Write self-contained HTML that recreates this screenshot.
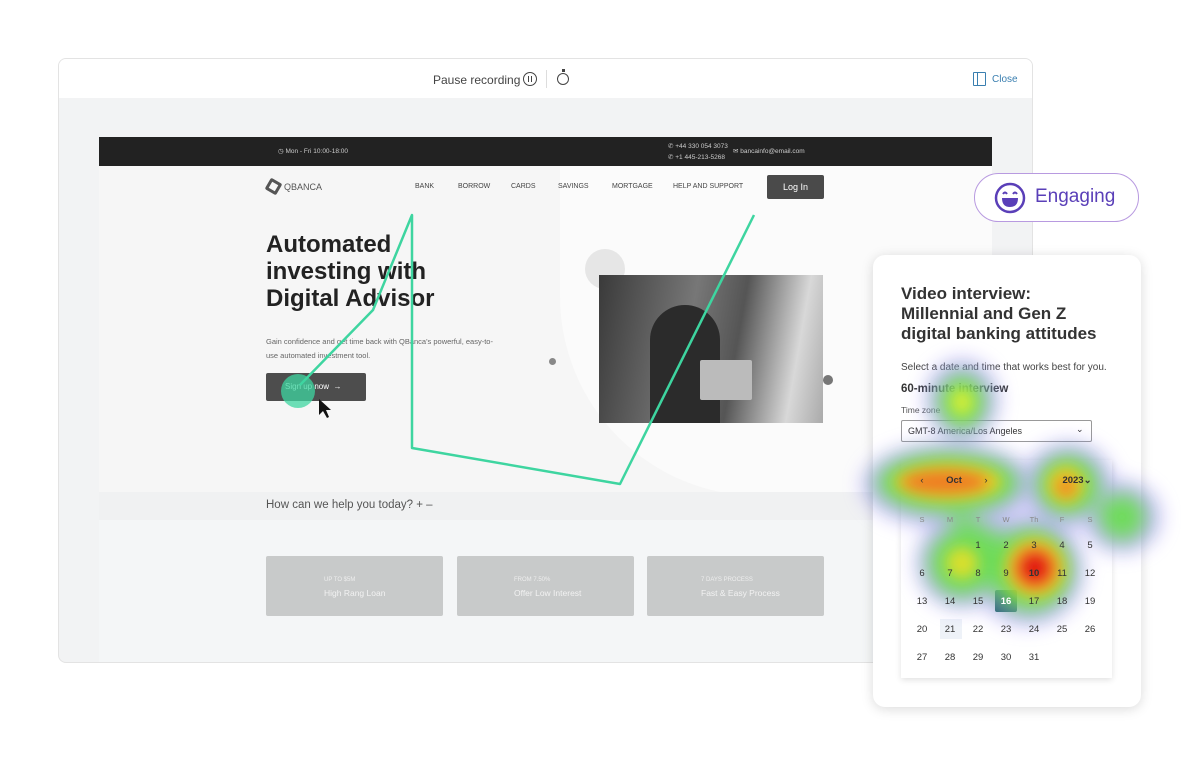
<!DOCTYPE html>
<html><head><meta charset="utf-8"><style>
*{margin:0;padding:0;box-sizing:border-box}
body{width:1200px;height:768px;background:#fff;font-family:"Liberation Sans",sans-serif;position:relative;overflow:hidden}
.abs{position:absolute}
.frame{left:58px;top:58px;width:975px;height:605px;border:1px solid #e3e3e3;border-radius:8px;background:#f2f3f4;overflow:hidden}
.hdr{left:0;top:0;width:100%;height:39px;background:#fff}
.t{position:absolute;white-space:nowrap}
.nav span{position:absolute;font-size:7px;color:#444;top:183px}
.cal span{position:absolute;width:20px;text-align:center;font-size:9.5px;color:#333}
</style></head><body>
<div class="abs frame">
 <div class="abs hdr"></div>
 <div class="t" style="left:374px;top:14px;font-size:12px;color:#444">Pause recording</div>
 <div class="abs" style="left:464px;top:13px;width:14px;height:14px;border:1.3px solid #444;border-radius:50%"></div>
 <div class="abs" style="left:469px;top:17px;width:4px;height:6px;border-left:1.3px solid #444;border-right:1.3px solid #444"></div>
 <div class="abs" style="left:487px;top:11px;width:1px;height:18px;background:#ddd"></div>
 <div class="abs" style="left:498px;top:14px;width:12px;height:12px;border:1.3px solid #444;border-radius:50%"></div>
 <div class="abs" style="left:503px;top:10px;width:3px;height:3px;background:#444"></div>
 <div class="abs" style="left:914px;top:13px;width:13px;height:14px;border:1.3px solid #3a7fb0;border-radius:1px"></div>
 <div class="abs" style="left:918px;top:13px;width:1px;height:14px;background:#3a7fb0"></div>
 <div class="t" style="left:933px;top:15px;font-size:10px;color:#3a7fb0">Close</div>
</div>
<!-- site -->
<div class="abs" style="left:99px;top:137px;width:893px;height:29px;background:#222"></div>
<div class="t" style="left:278px;top:147px;font-size:6.5px;color:#ccc">◷ Mon - Fri 10:00-18:00</div>
<div class="t" style="left:668px;top:142px;font-size:6.5px;color:#ccc">✆ +44 330 054 3073</div>
<div class="t" style="left:668px;top:153px;font-size:6.5px;color:#ccc">✆ +1 445-213-5268</div>
<div class="t" style="left:733px;top:147px;font-size:6.5px;color:#ccc">✉ bancainfo@email.com</div>
<div class="abs" style="left:99px;top:166px;width:893px;height:330px;background:#f6f6f6"></div>
<div class="abs" style="left:560px;top:166px;width:432px;height:330px;background:#fbfbfb;border-radius:0 0 0 200px"></div>
<div class="abs" style="left:267px;top:180px;width:13px;height:13px;border:3px solid #555;transform:rotate(30deg);border-radius:2px"></div>
<div class="t" style="left:284px;top:182px;font-size:9px;color:#555">QBANCA</div>
<div class="nav">
<span style="left:415px">BANK</span><span style="left:458px">BORROW</span><span style="left:511px">CARDS</span><span style="left:558px">SAVINGS</span><span style="left:612px">MORTGAGE</span><span style="left:673px">HELP AND SUPPORT</span></div>
<div class="abs" style="left:767px;top:175px;width:57px;height:24px;background:#4a4a4a;border-radius:2px;color:#fff;font-size:9px;text-align:center;line-height:24px">Log In</div>
<div class="t" style="left:266px;top:231px;font-size:24px;line-height:27px;font-weight:bold;color:#222">Automated<br>investing with<br>Digital Advisor</div>
<div class="t" style="left:266px;top:335px;font-size:7.5px;line-height:14px;color:#666">Gain confidence and get time back with QBanca's powerful, easy-to-<br>use automated investment tool.</div>
<div class="abs" style="left:266px;top:373px;width:100px;height:28px;background:#4d4d4d;border-radius:2px"></div>
<div class="t" style="left:285px;top:382px;font-size:8px;color:#fff">Sign up now &nbsp;→</div>
<div class="abs" style="left:281px;top:374px;width:34px;height:34px;border-radius:50%;background:rgba(62,213,160,.75)"></div>
<div class="abs" style="left:549px;top:358px;width:7px;height:7px;border-radius:50%;background:#888"></div>
<div class="abs" style="left:823px;top:375px;width:10px;height:10px;border-radius:50%;background:#777"></div>
<div class="abs" style="left:585px;top:249px;width:40px;height:40px;border-radius:50%;background:#e6e6e6"></div>
<div class="abs" style="left:599px;top:275px;width:224px;height:148px;background:linear-gradient(100deg,#3a3a3a,#777 40%,#555 60%,#d8d8d8 85%,#aaa)"></div>
<div class="abs" style="left:650px;top:305px;width:70px;height:118px;border-radius:35px 35px 0 0;background:#2b2b2b"></div>
<div class="abs" style="left:700px;top:360px;width:52px;height:40px;background:#bbb;border-radius:2px"></div>
<div class="abs" style="left:99px;top:492px;width:893px;height:28px;background:#f0f1f2"></div>
<div class="t" style="left:266px;top:499px;font-size:11.5px;color:#555">How can we help you today? + –</div>
<div class="abs" style="left:99px;top:520px;width:893px;height:142px;background:#f4f6f7"></div>
<div class="abs" style="left:266px;top:556px;width:177px;height:60px;background:#c8caca;border-radius:2px"></div>
<div class="abs" style="left:457px;top:556px;width:177px;height:60px;background:#c8caca;border-radius:2px"></div>
<div class="abs" style="left:647px;top:556px;width:177px;height:60px;background:#c8caca;border-radius:2px"></div>
<div class="t" style="left:324px;top:577px;font-size:6px;color:#eee">UP TO $5M</div><div class="t" style="left:324px;top:588px;font-size:8.5px;color:#f2f2f2">High Rang Loan</div>
<div class="t" style="left:514px;top:577px;font-size:6px;color:#eee">FROM 7.50%</div><div class="t" style="left:514px;top:588px;font-size:8.5px;color:#f2f2f2">Offer Low Interest</div>
<div class="t" style="left:701px;top:577px;font-size:6px;color:#eee">7 DAYS PROCESS</div><div class="t" style="left:701px;top:588px;font-size:8.5px;color:#f2f2f2">Fast &amp; Easy Process</div>
<svg class="abs" style="left:0;top:0" width="1200" height="768"><polyline points="300,385 373,310 412,215 412,448 620,484 754,215" fill="none" stroke="#3ed5a0" stroke-width="2.5" stroke-linejoin="round"/>
<path d="M319,399 L319,415 L323,411 L327,418 L329,417 L326,410 L331,410 Z" fill="#111"/></svg>
<!-- engaging -->
<div class="abs" style="left:974px;top:173px;width:165px;height:49px;border:1.5px solid #b89ae0;border-radius:25px;background:#fff"></div>
<svg class="abs" style="left:994px;top:182px" width="32" height="32"><circle cx="16" cy="16" r="14" fill="none" stroke="#5a3fb8" stroke-width="2.5"/><path d="M9,12 q2,-3 4,0 M19,12 q2,-3 4,0" fill="none" stroke="#5a3fb8" stroke-width="2"/><path d="M8,16 h16 q0,9 -8,9 q-8,0 -8,-9z" fill="#5a3fb8"/></svg>
<div class="t" style="left:1035px;top:186px;font-size:19px;color:#5a3fb8">Engaging</div>
<!-- card -->
<div class="abs" style="left:873px;top:255px;width:268px;height:452px;background:#fff;border-radius:12px;box-shadow:0 2px 12px rgba(0,0,0,.15)"></div>
<div class="t" style="left:901px;top:284px;font-size:17px;line-height:20px;font-weight:bold;color:#333">Video interview:<br>Millennial and Gen Z<br>digital banking attitudes</div>
<div class="t" style="left:901px;top:362px;font-size:10px;color:#444">Select a date and time that works best for you.</div>
<div class="t" style="left:901px;top:383px;font-size:11.5px;font-weight:bold;color:#333">60-minute interview</div>
<div class="t" style="left:901px;top:405px;font-size:8.5px;color:#555">Time zone</div>
<div class="abs" style="left:901px;top:420px;width:191px;height:22px;border:1px solid #999;border-radius:2px"></div>
<div class="t" style="left:908px;top:426px;font-size:9px;color:#333">GMT-8 America/Los Angeles</div>
<div class="t" style="left:1076px;top:424px;font-size:9px;color:#333">⌄</div>
<div class="abs" style="left:901px;top:460px;width:211px;height:218px;background:#fff;box-shadow:0 2px 6px rgba(0,0,0,.12)"></div>
<div class="abs" style="left:995px;top:590px;width:22px;height:22px;background:#0f5e50;border-radius:2px"></div>
<div class="abs" style="left:940px;top:619px;width:22px;height:20px;background:#eef2f8"></div>
<!-- heatmap -->
<svg class="abs" style="left:0;top:0" width="1200" height="768">
<defs><filter id="b" x="-50%" y="-50%" width="200%" height="200%"><feGaussianBlur stdDeviation="10"/></filter><filter id="c" x="-50%" y="-50%" width="200%" height="200%"><feGaussianBlur stdDeviation="7"/></filter></defs>
<g filter="url(#b)" opacity=".55">
<ellipse cx="948" cy="485" rx="85" ry="42" fill="#8b7cf5"/><ellipse cx="1068" cy="485" rx="45" ry="42" fill="#8b7cf5"/><ellipse cx="1122" cy="517" rx="38" ry="35" fill="#8b7cf5"/>
<ellipse cx="1028" cy="570" rx="55" ry="55" fill="#8b7cf5"/><ellipse cx="962" cy="563" rx="45" ry="45" fill="#8b7cf5"/><ellipse cx="962" cy="400" rx="36" ry="40" fill="#8b7cf5"/>
<ellipse cx="990" cy="535" rx="65" ry="18" fill="#8b7cf5" transform="rotate(30 990 535)"/>
</g>
<g filter="url(#b)" opacity=".9">
<ellipse cx="948" cy="483" rx="72" ry="30" fill="#66e04a"/><ellipse cx="1068" cy="485" rx="32" ry="30" fill="#66e04a"/><ellipse cx="1122" cy="517" rx="24" ry="24" fill="#66e04a"/>
<ellipse cx="1030" cy="570" rx="42" ry="42" fill="#66e04a"/><ellipse cx="962" cy="563" rx="34" ry="34" fill="#66e04a"/><ellipse cx="962" cy="402" rx="24" ry="28" fill="#66e04a"/>
<ellipse cx="990" cy="540" rx="45" ry="10" fill="#66e04a" transform="rotate(30 990 540)"/>
</g>
<g filter="url(#c)">
<ellipse cx="948" cy="482" rx="54" ry="19" fill="#f2d020" opacity=".9"/><ellipse cx="1066" cy="485" rx="19" ry="19" fill="#f2d020" opacity=".9"/><ellipse cx="1035" cy="568" rx="30" ry="30" fill="#f2d020" opacity=".9"/><ellipse cx="962" cy="563" rx="16" ry="16" fill="#f2e020" opacity=".8"/><ellipse cx="962" cy="402" rx="12" ry="14" fill="#e8f030" opacity=".8"/>
<ellipse cx="945" cy="482" rx="44" ry="13" fill="#f07020" opacity=".85"/><ellipse cx="1066" cy="487" rx="11" ry="11" fill="#f08020" opacity=".85"/><ellipse cx="1035" cy="568" rx="22" ry="22" fill="#f04020" opacity=".9"/><ellipse cx="1035" cy="568" rx="12" ry="12" fill="#e01010"/>
</g></svg>
<div class="cal">
<span style="left:912px;top:475px">‹</span><span style="left:944px;top:475px;font-weight:bold">Oct</span><span style="left:976px;top:475px">›</span><span style="left:1060px;top:475px;width:34px;font-weight:bold">2023⌄</span>
<span style="left:912px;top:515px;font-size:7.5px;color:#888">S</span><span style="left:940px;top:515px;font-size:7.5px;color:#888">M</span><span style="left:968px;top:515px;font-size:7.5px;color:#888">T</span><span style="left:996px;top:515px;font-size:7.5px;color:#888">W</span><span style="left:1024px;top:515px;font-size:7.5px;color:#888">Th</span><span style="left:1052px;top:515px;font-size:7.5px;color:#888">F</span><span style="left:1080px;top:515px;font-size:7.5px;color:#888">S</span>
<span style="left:968px;top:540px">1</span><span style="left:996px;top:540px">2</span><span style="left:1024px;top:540px">3</span><span style="left:1052px;top:540px">4</span><span style="left:1080px;top:540px">5</span>
<span style="left:912px;top:568px">6</span><span style="left:940px;top:568px">7</span><span style="left:968px;top:568px">8</span><span style="left:996px;top:568px">9</span><span style="left:1024px;top:568px;font-weight:bold">10</span><span style="left:1052px;top:568px">11</span><span style="left:1080px;top:568px">12</span>
<span style="left:912px;top:596px">13</span><span style="left:940px;top:596px">14</span><span style="left:968px;top:596px">15</span><span style="left:996px;top:596px;color:#fff;font-weight:bold">16</span><span style="left:1024px;top:596px">17</span><span style="left:1052px;top:596px">18</span><span style="left:1080px;top:596px">19</span>
<span style="left:912px;top:624px">20</span><span style="left:940px;top:624px">21</span><span style="left:968px;top:624px">22</span><span style="left:996px;top:624px">23</span><span style="left:1024px;top:624px">24</span><span style="left:1052px;top:624px">25</span><span style="left:1080px;top:624px">26</span>
<span style="left:912px;top:652px">27</span><span style="left:940px;top:652px">28</span><span style="left:968px;top:652px">29</span><span style="left:996px;top:652px">30</span><span style="left:1024px;top:652px">31</span>
</div>
</body></html>
